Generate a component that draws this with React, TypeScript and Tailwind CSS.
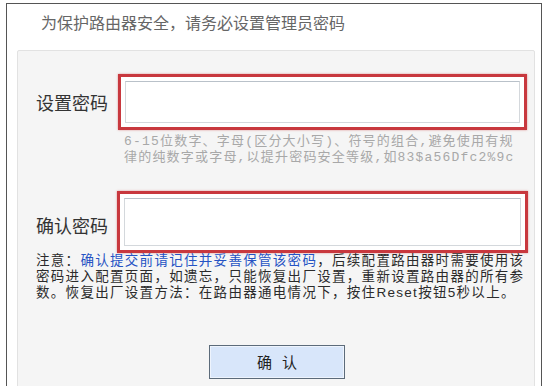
const cjk = "font-['Noto_Sans_CJK_SC','Noto_Sans',sans-serif]";

function PasswordField({ height }: { height: string }) {
  return (
    <div className={`${height} border-[3px] border-[#c8383e] bg-white p-[4px] shadow-[0_0_2px_rgba(200,50,50,0.5)]`}>
      <input
        type="password"
        className="block h-full w-full border border-[#d4d8dc] border-t-[#b9c1c9] bg-white outline-none"
      />
    </div>
  );
}

export default function App() {
  return (
    <div className={`min-h-[386px] bg-white pl-[6px] pt-[3px] ${cjk}`}>
      <div className="h-[400px] w-[536px] border border-[#555]">
        <p className="pl-[34px] pt-[8px] text-[16px] leading-[20px] text-[#666]">
          为保护路由器安全，请务必设置管理员密码
        </p>

        <div className="ml-[10px] mt-[18px] h-[360px] w-[518px] rounded-[2px] border border-[#e2e2e2] bg-[#f5f5f5]">
          <div className="mt-[23px] flex items-center">
            <span className="w-[100px] pl-[18px] text-[18px] leading-[24px] text-[#333]">设置密码</span>
            <div className="w-[409px]">
              <PasswordField height="h-[56px]" />
            </div>
          </div>

          <div className="ml-[106px] mt-[4px] font-['Liberation_Mono','Noto_Sans_CJK_SC',monospace] text-[13px] leading-[16px] tracking-[1.2px] text-[#a8a8a8]">
            <span className="block whitespace-nowrap">6-15位数字、字母(区分大小写)、符号的组合,避免使用有规</span>
            <span className="block whitespace-nowrap">律的纯数字或字母,以提升密码安全等级,如83$a56Dfc2%9c</span>
          </div>

          <div className="mt-[25px] flex items-center">
            <span className="w-[99px] pt-[6px] pl-[18px] text-[18px] leading-[24px] text-[#333]">确认密码</span>
            <div className="w-[411px]">
              <PasswordField height="h-[62px]" />
            </div>
          </div>

          <p className="ml-[18px] w-[492px] font-['Liberation_Sans','Noto_Sans_CJK_SC',sans-serif] text-[13.5px] leading-[16px] tracking-[1.3px] text-[#2b2b2b]">
            <span className="block whitespace-nowrap">
              注意：<span className="text-[#2553c4]">确认提交前请记住并妥善保管该密码</span>，后续配置路由器时需要使用该
            </span>
            <span className="block whitespace-nowrap">密码进入配置页面，如遗忘，只能恢复出厂设置，重新设置路由器的所有参</span>
            <span className="block whitespace-nowrap">数。恢复出厂设置方法：在路由器通电情况下，按住Reset按钮5秒以上。</span>
          </p>

          <div className="mt-[44px] flex pl-[191px]">
            <button
              type="button"
              className="h-[34px] w-[136px] border border-[#5c6b7a] bg-[#d8e6fa] text-[15px] text-[#222] shadow-[inset_0_0_0_1px_#eef4fd]"
            >
              确&nbsp;&nbsp;&nbsp;认
            </button>
          </div>
        </div>
      </div>
    </div>
  );
}
